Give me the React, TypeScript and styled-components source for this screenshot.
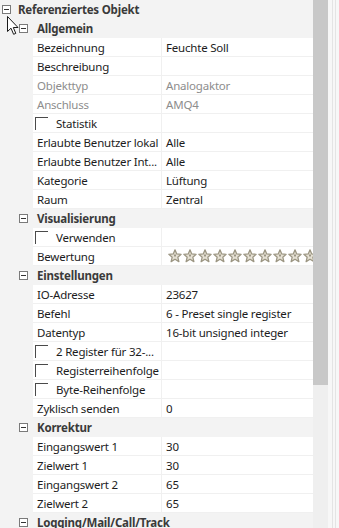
import React from 'react';
import styled, { createGlobalStyle } from 'styled-components';

const GlobalStyle = createGlobalStyle`
  html, body {
    margin: 0;
    padding: 0;
    background: #ffffff;
    overflow: hidden;
  }
  body {
    font-family: "Noto Sans", "Open Sans", sans-serif;
    font-size: 11.5px;
    letter-spacing: -0.2px;
  }
`;

type Row =
  | { kind: 'cat'; label: string; top?: boolean }
  | { kind: 'prop'; label: string; value?: string; disabled?: boolean }
  | { kind: 'check'; label: string }
  | { kind: 'stars'; label: string };

const rows: Row[] = [
  { kind: 'cat', label: 'Referenziertes Objekt', top: true },
  { kind: 'cat', label: 'Allgemein' },
  { kind: 'prop', label: 'Bezeichnung', value: 'Feuchte Soll' },
  { kind: 'prop', label: 'Beschreibung', value: '' },
  { kind: 'prop', label: 'Objekttyp', value: 'Analogaktor', disabled: true },
  { kind: 'prop', label: 'Anschluss', value: 'AMQ4', disabled: true },
  { kind: 'check', label: 'Statistik' },
  { kind: 'prop', label: 'Erlaubte Benutzer lokal', value: 'Alle' },
  { kind: 'prop', label: 'Erlaubte Benutzer Int...', value: 'Alle' },
  { kind: 'prop', label: 'Kategorie', value: 'Lüftung' },
  { kind: 'prop', label: 'Raum', value: 'Zentral' },
  { kind: 'cat', label: 'Visualisierung' },
  { kind: 'check', label: 'Verwenden' },
  { kind: 'stars', label: 'Bewertung' },
  { kind: 'cat', label: 'Einstellungen' },
  { kind: 'prop', label: 'IO-Adresse', value: '23627' },
  { kind: 'prop', label: 'Befehl', value: '6 - Preset single register' },
  { kind: 'prop', label: 'Datentyp', value: '16-bit unsigned integer' },
  { kind: 'check', label: '2 Register für 32-...' },
  { kind: 'check', label: 'Registerreihenfolge' },
  { kind: 'check', label: 'Byte-Reihenfolge' },
  { kind: 'prop', label: 'Zyklisch senden', value: '0' },
  { kind: 'cat', label: 'Korrektur' },
  { kind: 'prop', label: 'Eingangswert 1', value: '30' },
  { kind: 'prop', label: 'Zielwert 1', value: '30' },
  { kind: 'prop', label: 'Eingangswert 2', value: '65' },
  { kind: 'prop', label: 'Zielwert 2', value: '65' },
  { kind: 'cat', label: 'Logging/Mail/Call/Track' },
];

const Window = styled.div`
  position: relative;
  display: flex;
  width: 339px;
  height: 528px;
  overflow: hidden;
  background: #ffffff;
`;

const Grid = styled.div`
  width: 313px;
  flex: none;
  background: #f3f3f3;
  display: flex;
  flex-direction: column;
`;

const CatRow = styled.div<{ $top?: boolean }>`
  height: 19px;
  flex: none;
  display: flex;
  align-items: center;
  padding-left: ${(p) => (p.$top ? '2px' : '19px')};
  gap: ${(p) => (p.$top ? '7px' : '9px')};
  font-weight: bold;
  color: #3a3a3a;
  white-space: nowrap;
  background: #f3f3f3;
`;

const MinusBox = styled.span`
  position: relative;
  width: 9px;
  height: 9px;
  box-sizing: border-box;
  border: 1px solid #7a7a7a;
  background: #ffffff;
  flex: none;
  &::after {
    content: '';
    position: absolute;
    left: 1px;
    right: 1px;
    top: 3px;
    height: 1px;
    background: #333333;
  }
`;

const PropRow = styled.div`
  height: 19px;
  flex: none;
  margin-left: 33px;
  display: grid;
  grid-template-columns: 129px 1fr;
  background: #ffffff;
  box-sizing: border-box;
  border-bottom: 1px solid #f0f0f0;
`;

const NameCell = styled.div<{ $disabled?: boolean }>`
  display: flex;
  align-items: center;
  padding-left: 4px;
  gap: 8px;
  border-right: 1px solid #f0f0f0;
  color: ${(p) => (p.$disabled ? '#8d8d8d' : '#1c1c1c')};
  white-space: nowrap;
  overflow: hidden;
`;

const ValueCell = styled.div<{ $disabled?: boolean }>`
  display: flex;
  align-items: center;
  padding-left: 4px;
  color: ${(p) => (p.$disabled ? '#8d8d8d' : '#1c1c1c')};
  white-space: nowrap;
  overflow: hidden;
`;

const CheckBox = styled.span`
  width: 13px;
  height: 13px;
  box-sizing: border-box;
  border-top: 1px solid #4a4a4a;
  border-left: 1px solid #4a4a4a;
  margin-left: -2px;
  flex: none;
`;

const Stars = styled.div`
  display: flex;
  gap: 1px;
  padding-left: 6px;
  align-items: center;
  overflow: hidden;
`;

const ScrollTrack = styled.div`
  width: 15px;
  flex: none;
  background: #efefef;
  display: flex;
  flex-direction: column;
`;

const Thumb = styled.div`
  height: 385px;
  background: #c8c8c8;
`;

const Edge = styled.div`
  flex: 1;
  background: #f7f7f7;
  display: flex;
  justify-content: center;
  gap: 2px;
`;

const EdgeLine = styled.div`
  width: 1px;
  background: #e4e4e4;
`;

const Cursor = styled.svg`
  position: absolute;
  left: 7px;
  top: 16px;
`;

const Star = () => (
  <svg width="14" height="14" viewBox="0 0 13 13" style={{ flex: 'none' }}>
    <path
      d="M6.5 0.8 L8.1 4.6 L12.2 4.9 L9.1 7.6 L10.1 11.7 L6.5 9.5 L2.9 11.7 L3.9 7.6 L0.8 4.9 L4.9 4.6 Z"
      fill="#e6e1d4"
      stroke="#9c9683"
      strokeWidth="1.2"
      strokeLinejoin="round"
    />
    <path d="M6.5 4.2 L7.3 6 L6.5 7.6 L5.7 6 Z" fill="#8a8472" />
  </svg>
);

const renderRow = (row: Row, i: number): JSX.Element => {
  if (row.kind === 'cat') {
    return (
      <CatRow key={i} $top={row.top}>
        <MinusBox />
        <span>{row.label}</span>
      </CatRow>
    );
  }
  if (row.kind === 'check') {
    return (
      <PropRow key={i}>
        <NameCell>
          <CheckBox />
          <span>{row.label}</span>
        </NameCell>
        <ValueCell />
      </PropRow>
    );
  }
  if (row.kind === 'stars') {
    return (
      <PropRow key={i}>
        <NameCell>{row.label}</NameCell>
        <Stars>
          {Array.from({ length: 10 }).map((_, s) => (
            <Star key={s} />
          ))}
        </Stars>
      </PropRow>
    );
  }
  return (
    <PropRow key={i}>
      <NameCell $disabled={row.disabled}>{row.label}</NameCell>
      <ValueCell $disabled={row.disabled}>{row.value}</ValueCell>
    </PropRow>
  );
};

const App: React.FC = () => {
  return (
    <>
      <GlobalStyle />
      <Window>
        <Grid>{rows.map(renderRow)}</Grid>
        <ScrollTrack>
          <Thumb />
        </ScrollTrack>
        <Edge>
          <EdgeLine />
          <EdgeLine />
        </Edge>
        <Cursor width="14" height="20" viewBox="0 0 14 20">
          <path
            d="M0.5 0.5 L0.5 15.5 L4 12.2 L6.6 18.3 L8.8 17.4 L6.3 11.5 L11 11.5 Z"
            fill="#ffffff"
            stroke="#1a1a1a"
            strokeWidth="1"
            strokeLinejoin="round"
          />
        </Cursor>
      </Window>
    </>
  );
};

export default App;
